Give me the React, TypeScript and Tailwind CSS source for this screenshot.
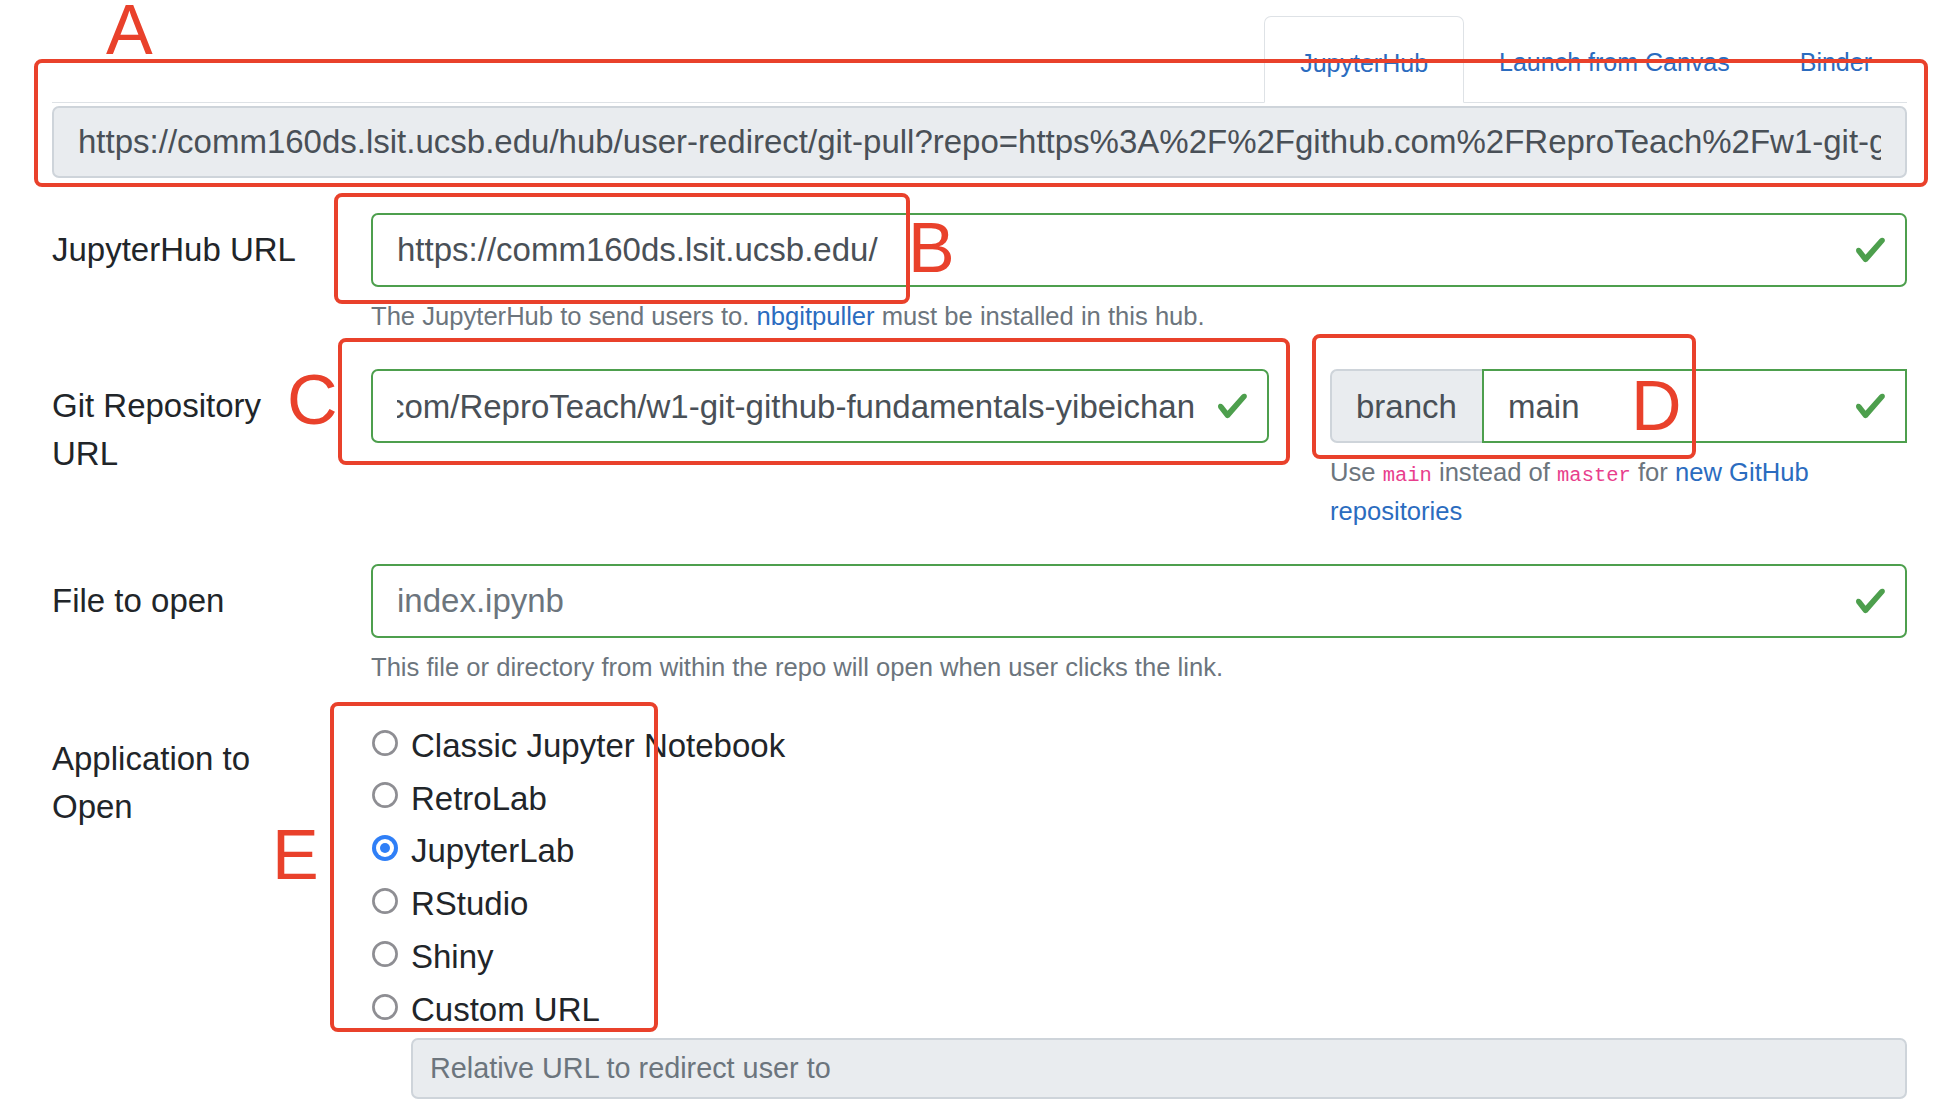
import React from 'react';

const GREEN = '#4d9f4d';

const Check: React.FC = () => (
  <svg
    viewBox="0 0 8 8"
    className="absolute right-[18px] top-1/2 h-[33px] w-[33px] -translate-y-1/2"
  >
    <path
      fill={GREEN}
      d="M2.3 6.73L.6 4.53c-.4-1.04.46-1.4 1.1-.8l1.1 1.4 3.4-3.8c.6-.63 1.6-.27 1.2.7l-4 4.6c-.43.5-.8.4-1.1.1z"
    />
  </svg>
);

interface ValidInputProps {
  value: string;
  muted?: boolean;
  alignEnd?: boolean;
  className?: string;
}

const ValidInput: React.FC<ValidInputProps> = ({ value, muted, alignEnd, className = '' }) => (
  <div
    className={`relative flex h-[74px] items-center rounded-[7px] border-2 border-[#4d9f4d] bg-white pl-[24px] pr-[72px] text-[33px] ${
      muted ? 'text-[#6c757d]' : 'text-[#495057]'
    } ${className}`}
  >
    <div className={`flex w-full overflow-hidden whitespace-nowrap ${alignEnd ? 'justify-end' : ''}`}>
      <span className="shrink-0">{value}</span>
    </div>
    <Check />
  </div>
);

const Help: React.FC<{ children: React.ReactNode }> = ({ children }) => (
  <div className="mt-[10px] text-[25.6px] leading-[38.4px] text-[#6c757d]">{children}</div>
);

const Label: React.FC<{ children: React.ReactNode }> = ({ children }) => (
  <div className="w-[319px] shrink-0 pr-[53px] pt-[13px] text-[33px] leading-[48px] text-[#212529]">
    {children}
  </div>
);

const Radio: React.FC<{ checked?: boolean }> = ({ checked }) =>
  checked ? (
    <svg viewBox="0 0 26 26" className="mb-[6px] ml-[1px] h-[26px] w-[26px] shrink-0">
      <circle cx="13" cy="13" r="13" fill="#2f7ff7" />
      <circle cx="13" cy="13" r="9" fill="#fff" />
      <circle cx="13" cy="13" r="5" fill="#2f7ff7" />
    </svg>
  ) : (
    <svg viewBox="0 0 26 26" className="mb-[6px] ml-[1px] h-[26px] w-[26px] shrink-0">
      <circle cx="13" cy="13" r="11.6" fill="#fff" stroke="#8e8e93" strokeWidth="2.7" />
    </svg>
  );

const apps = ['Classic Jupyter Notebook', 'RetroLab', 'JupyterLab', 'RStudio', 'Shiny', 'Custom URL'];

const Annotation: React.FC<{ className: string }> = ({ className }) => (
  <div className={`pointer-events-none absolute rounded-[8px] border-4 border-[#e9412b] ${className}`} />
);

const Letter: React.FC<{ children: string; className: string }> = ({ children, className }) => (
  <div className={`pointer-events-none absolute text-[70px] leading-none text-[#e9412b] ${className}`}>
    {children}
  </div>
);

const codeCls = "font-['Liberation_Mono',monospace] text-[20.5px] leading-none text-[#e83e8c]";

export default function App() {
  return (
    <div className="relative h-[1104px] overflow-hidden bg-white font-['Liberation_Sans',Arial,sans-serif]">
      <div className="pl-[52px] pr-[47px] pt-[16px]">
        {/* tabs */}
        <div className="flex justify-end border-b border-[#dee2e6]">
          <div className="-mb-px flex h-[87px] items-center rounded-t-[7px] border border-[#dee2e6] border-b-white bg-white px-[35px] pt-[8px] text-[25px] text-[#2b6cbf]">
            JupyterHub
          </div>
          <div className="flex h-[86px] items-center px-[35px] pt-[8px] text-[25px] text-[#2b6cbf]">
            Launch from Canvas
          </div>
          <div className="flex h-[86px] items-center px-[35px] pt-[8px] text-[25px] text-[#2b6cbf]">
            Binder
          </div>
        </div>

        <div className="mt-[3px] flex h-[72px] items-center rounded-[7px] border-2 border-[#ced4da] bg-[#e9ecef] px-[24px] text-[33px] text-[#495057]">
          <div className="overflow-hidden whitespace-nowrap">
            https://comm160ds.lsit.ucsb.edu/hub/user-redirect/git-pull?repo=https%3A%2F%2Fgithub.com%2FReproTeach%2Fw1-git-github-fundamentals-yibeichan&amp;urlpath=lab%2Ftree%2Fw1-git-github-fundamentals-yibeichan%2Findex.ipynb&amp;branch=main
          </div>
        </div>

        {/* JupyterHub URL */}
        <div className="mt-[35px] flex">
          <Label>JupyterHub URL</Label>
          <div className="flex-1">
            <ValidInput value="https://comm160ds.lsit.ucsb.edu/" />
            <Help>
              The JupyterHub to send users to. <span className="text-[#2b6cbf]">nbgitpuller</span> must be
              installed in this hub.
            </Help>
          </div>
        </div>

        {/* Git repository */}
        <div className="mt-[34px] flex">
          <Label>Git Repository URL</Label>
          <div className="flex flex-1 gap-[61px]">
            <ValidInput
              className="w-[898px] shrink-0"
              alignEnd
              value="https://github.com/ReproTeach/w1-git-github-fundamentals-yibeichan"
            />
            <div className="flex-1">
              <div className="flex h-[74px]">
                <div className="flex w-[152px] shrink-0 items-center rounded-l-[7px] border-2 border-r-0 border-[#ced4da] bg-[#e9ecef] pl-[24px] text-[33px] text-[#495057]">
                  branch
                </div>
                <div className="relative flex flex-1 items-center border-2 border-[#4d9f4d] pl-[24px] text-[33px] text-[#495057]">
                  main
                  <Check />
                </div>
              </div>
              <Help>
                Use <code className={codeCls}>main</code> instead of <code className={codeCls}>master</code> for{' '}
                <span className="text-[#2b6cbf]">
                  new GitHub
                  <br />
                  repositories
                </span>
              </Help>
            </div>
          </div>
        </div>

        {/* File to open */}
        <div className="mt-[34px] flex">
          <Label>File to open</Label>
          <div className="flex-1">
            <ValidInput value="index.ipynb" muted />
            <Help>This file or directory from within the repo will open when user clicks the link.</Help>
          </div>
        </div>

        {/* Application */}
        <div className="mt-[35px] flex">
          <Label>Application to Open</Label>
          <div className="flex-1">
            <div className="flex flex-col gap-[4.8px]">
              {apps.map((app) => (
                <div key={app} className="flex h-[48px] items-center">
                  <Radio checked={app === 'JupyterLab'} />
                  <span className="ml-[13px] text-[33px] text-[#212529]">{app}</span>
                </div>
              ))}
            </div>
            <div className="ml-[40px] mt-[4px] flex h-[61px] items-center rounded-[7px] border-2 border-[#ced4da] bg-[#e9ecef] px-[17px] text-[28.8px] text-[#6c757d]">
              Relative URL to redirect user to
            </div>
          </div>
        </div>
      </div>

      {/* annotations */}
      <Annotation className="left-[34px] top-[59px] h-[128px] w-[1894px]" />
      <Annotation className="left-[334px] top-[193px] h-[111px] w-[576px]" />
      <Annotation className="left-[338px] top-[338px] h-[127px] w-[952px]" />
      <Annotation className="left-[1312px] top-[334px] h-[125px] w-[384px]" />
      <Annotation className="left-[330px] top-[702px] h-[330px] w-[328px]" />
      <Letter className="left-[106px] top-[-5px]">A</Letter>
      <Letter className="left-[908px] top-[213px]">B</Letter>
      <Letter className="left-[287px] top-[365px]">C</Letter>
      <Letter className="left-[1631px] top-[371px]">D</Letter>
      <Letter className="left-[272px] top-[820px]">E</Letter>
    </div>
  );
}
